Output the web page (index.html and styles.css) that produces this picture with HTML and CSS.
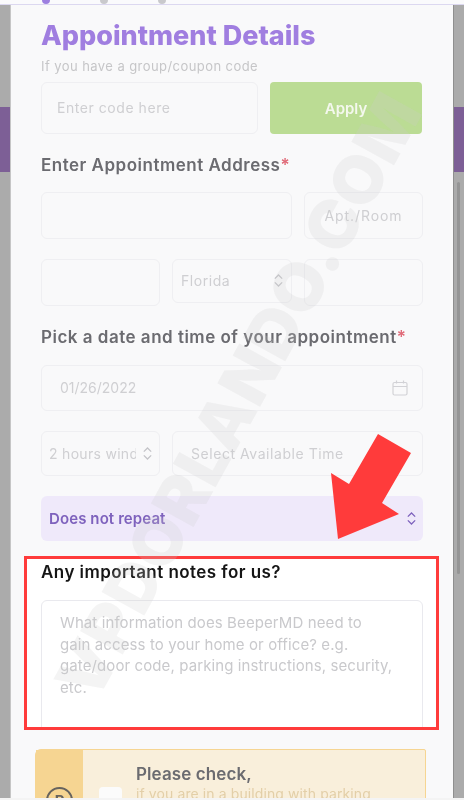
FILE: index.html
```html
<!DOCTYPE html>
<html lang="en">
<head>
<meta charset="utf-8">
<title>Appointment Details</title>
<link rel="stylesheet" href="styles.css">
</head>
<body>
<div class="screen">
  <div class="band"></div>
  <div class="topstrip">
    <span class="dot dot-on"></span><span class="dot"></span><span class="dot"></span>
  </div>
  <main class="modal">
    <h1 class="title">Appointment Details</h1>
    <p class="hint">If you have a group/coupon code</p>
    <div class="row row-code">
      <div class="field field-code"><span class="ph">Enter code here</span></div>
      <div class="apply">Apply</div>
    </div>
    <h2 class="section first">Enter Appointment Address<span class="req">*</span></h2>
    <div class="row row-addr">
      <div class="field grow"></div>
      <div class="field w-apt center"><span class="ph wide">Apt./Room</span></div>
    </div>
    <div class="row row-city">
      <div class="field w-city"></div>
      <div class="field w-state short"><span class="ph">Florida</span>
        <svg class="updown" viewBox="0 0 12 14"><path d="M2 5l4-4 4 4M2 9l4 4 4-4"/></svg>
      </div>
      <div class="field w-apt"></div>
    </div>
    <h2 class="section">Pick a date and time of your appointment<span class="req">*</span></h2>
    <div class="row row-date">
      <div class="field date"><span class="ph nums">01/26/2022</span>
        <svg class="cal" viewBox="0 0 16 16"><rect x="1" y="2.500" width="14" height="12.500" rx="1.500"/><path d="M1 6.500h14M4.500 .5v3M11.500 .5v3"/></svg>
      </div>
    </div>
    <div class="row row-time">
      <div class="field w-city win"><span class="ph clip">2 hours window</span>
        <svg class="updown" viewBox="0 0 12 14"><path d="M2 5l4-4 4 4M2 9l4 4 4-4"/></svg>
      </div>
      <div class="field grow avail"><span class="ph">Select Available Time</span></div>
    </div>
    <div class="repeat"><span>Does not repeat</span>
      <svg class="updown dark" viewBox="0 0 12 14"><path d="M2 5l4-4 4 4M2 9l4 4 4-4"/></svg>
    </div>
    <section class="notes">
      <h2 class="notes-label">Any important notes for us?</h2>
      <div class="notes-area">What information does BeeperMD need to gain access to your home or office? e.g. gate/door code, parking instructions, security, etc.</div>
    </section>
    <aside class="notice">
      <div class="notice-side">
        <span class="park">P</span>
      </div>
      <div class="notice-box"></div>
      <div class="notice-text">
        <div class="notice-title">Please check,</div>
        <div class="notice-sub">if you are in a building with parking</div>
      </div>
    </aside>
  </main>
  <div class="scrollbar"></div>
  <div class="bottomstrip"></div>
  <div class="watermark">VPDORLANDO.COM</div>
  <svg class="arrow" viewBox="0 0 464 800"><polygon points="338,539 331,473 349,484 378,434 411,453 382,503 399,514"/></svg>
</div>
</body>
</html>
```

FILE: styles.css
```css
* { box-sizing: border-box; }
html, body { margin: 0; padding: 0; }
body { font-family: Inter, "Noto Sans", sans-serif; }

.screen {
  position: relative;
  width: 464px;
  height: 800px;
  overflow: hidden;
  background: #ababab;
  filter: blur(0.35px);
}
.band {
  position: absolute;
  left: 0;
  right: 0;
  top: 107px;
  height: 65px;
  background: #7d5f96;
}
.topstrip {
  position: relative;
  height: 5px;
  background: #fafafc;
  border-bottom: 1px solid #dcd8f0;
  overflow: hidden;
  display: flex;
  gap: 50px;
  padding-left: 42px;
}
.dot {
  width: 8px;
  height: 8px;
  margin-top: -4px;
  border-radius: 50%;
  background: #c9c9cc;
}
.dot-on { background: #9d7fe0; }

.modal {
  position: relative;
  width: 442px;
  height: 795px;
  margin-left: 11px;
  padding: 13px 30px 0;
  background: #f9f9fa;
  box-shadow: -1px 0 0 #c6c6c6, 1px 0 0 #8f8f8f;
  overflow: hidden;
}
.title {
  margin: 0;
  height: 36px;
  line-height: 36px;
  font-size: 27px;
  font-weight: 800;
  color: #a07ee0;
  white-space: nowrap;
}
.hint {
  margin: 4px 0 0;
  height: 16px;
  line-height: 16px;
  font-size: 13px;
  letter-spacing: 0.43px;
  color: #c6c6c8;
}
.row { display: flex; gap: 12px; }
.row-code { margin-top: 8px; height: 52px; }
.row-addr { margin-top: 16px; height: 47px; }
.row-city { margin-top: 20px; height: 47px; }
.row-date { margin-top: 17px; height: 46px; }
.row-time { margin-top: 20px; height: 45px; }

.field {
  display: flex;
  align-items: center;
  padding-bottom: 1px;
  border: 1px solid #efeff2;
  border-radius: 6px;
  background: #f9f9fa;
}
.grow { flex: 1; }
.field-code { width: 217px; padding-left: 15px; }
.w-apt { width: 119px; }
.center { justify-content: center; }
.w-city { width: 119px; }
.w-state { width: 120px; padding-left: 8px; justify-content: space-between; padding-right: 7px; }
.short { height: 44px; }
.date { flex: 1; padding: 0 14px 1px 18px; justify-content: space-between; }
.win { padding: 0 6px 1px 7px; justify-content: space-between; }
.avail { padding-left: 18px; }

.ph {
  font-size: 14px;
  letter-spacing: 0.55px;
  color: #cfcfd2;
  white-space: nowrap;
}
.wide { letter-spacing: 0.9px; }
.nums { letter-spacing: 0; }
.clip {
  display: block;
  width: 87px;
  overflow: hidden;
  letter-spacing: 0.3px;
}
.apply {
  width: 152px;
  display: flex;
  align-items: center;
  justify-content: center;
  border-radius: 4px;
  background: #bbdc94;
  color: #f4f8ee;
  font-size: 15px;
  font-weight: 600;
}
.section {
  margin: 20px 0 0;
  height: 22px;
  line-height: 22px;
  font-size: 17px;
  font-weight: 600;
  letter-spacing: 0.5px;
  color: #6b6b70;
  white-space: nowrap;
}
.req { color: #e06a78; }
.updown {
  flex: none;
  width: 11px;
  height: 13px;
  fill: none;
  stroke: #c4c4c8;
  stroke-width: 1.4;
}
.updown.dark { stroke: #7e62bd; }
.cal {
  width: 16px;
  height: 16px;
  fill: none;
  stroke: #d2d2d6;
  stroke-width: 1.2;
}
.repeat {
  margin-top: 20px;
  height: 45px;
  padding: 0 6px 1px 8px;
  display: flex;
  align-items: center;
  justify-content: space-between;
  border-radius: 6px;
  background: #efe9fa;
  color: #7e62bd;
  font-size: 15px;
  font-weight: 600;
  letter-spacing: 0.1px;
}
.notes {
  margin: 15px -16px 0 -17px;
  height: 174px;
  padding: 2px 13px 0 14px;
  border: 3px solid #ff3b3b;
  background: #fff;
  overflow: hidden;
}
.notes-label {
  margin: 0;
  height: 22px;
  line-height: 22px;
  font-size: 17px;
  font-weight: 600;
  letter-spacing: 0.45px;
  color: #151515;
  white-space: nowrap;
}
.notes-area {
  margin-top: 17px;
  height: 160px;
  padding: 11px 28px 0 18px;
  border: 1px solid #e9e9ee;
  border-radius: 6px;
  font-size: 15px;
  line-height: 21.5px;
  letter-spacing: 0.1px;
  color: #c9c9cc;
}
.notice {
  display: flex;
  margin: 19px -3px 0 -6px;
  height: 80px;
  border: 1px solid #f6d592;
  border-radius: 6px 2px 0 0;
  background: #f9efdb;
}
.notice-side {
  flex: none;
  width: 47px;
  background: #f6d592;
  display: flex;
  justify-content: center;
  padding-top: 37px;
}
.park {
  width: 27px;
  height: 27px;
  border: 2px solid #66635e;
  border-radius: 50%;
  text-align: center;
  line-height: 23px;
  font-size: 15px;
  font-weight: 700;
  color: #66635e;
}
.notice-box {
  flex: none;
  width: 23px;
  height: 30px;
  margin: 37px 14px 0 16px;
  border-radius: 4px;
  background: #fbfbfb;
}
.notice-text { padding-top: 14px; white-space: nowrap; }
.notice-title {
  height: 20px;
  line-height: 20px;
  font-size: 17px;
  font-weight: 600;
  letter-spacing: 0.1px;
  color: #6b6b70;
}
.notice-sub {
  margin-top: 2px;
  font-size: 14px;
  line-height: 16px;
  letter-spacing: 0.1px;
  color: #e3cfa8;
}
.scrollbar {
  position: absolute;
  left: 457px;
  top: 182px;
  width: 3px;
  height: 392px;
  border-radius: 2px;
  background: #959595;
}
.bottomstrip {
  position: absolute;
  left: 0;
  right: 0;
  bottom: 0;
  height: 2px;
  background: #f4f4f4;
}
.watermark {
  position: absolute;
  left: 238px;
  top: 396px;
  transform: translate(-50%, -50%) rotate(-61deg);
  font-size: 67px;
  line-height: 1;
  font-weight: 900;
  letter-spacing: 0.5px;
  white-space: nowrap;
  color: rgba(205, 205, 205, 0.22);
  pointer-events: none;
}
.arrow {
  position: absolute;
  left: 0;
  top: 0;
  width: 464px;
  height: 800px;
  fill: #ff3b3b;
  pointer-events: none;
}
```
